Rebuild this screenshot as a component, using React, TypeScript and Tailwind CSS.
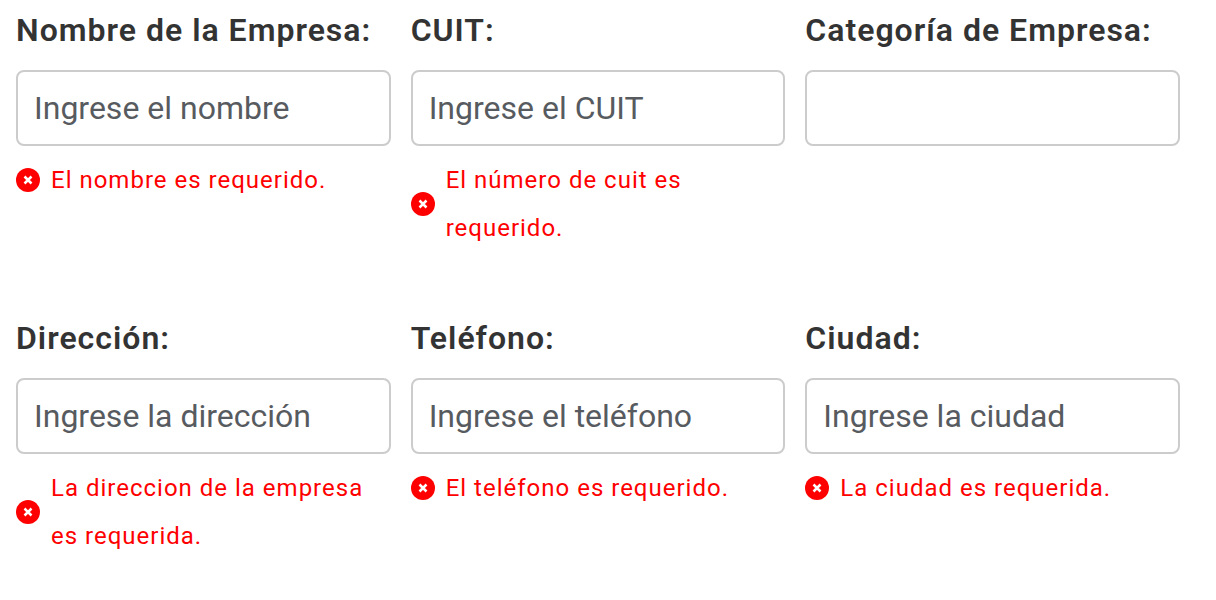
import React from 'react';

type Field = { id: string; label: string; placeholder?: string; error?: string };

const fields: Field[] = [
  { id: 'nombre', label: 'Nombre de la Empresa:', placeholder: 'Ingrese el nombre', error: 'El nombre es requerido.' },
  { id: 'cuit', label: 'CUIT:', placeholder: 'Ingrese el CUIT', error: 'El número de cuit es requerido.' },
  { id: 'categoria', label: 'Categoría de Empresa:' },
  { id: 'direccion', label: 'Dirección:', placeholder: 'Ingrese la dirección', error: 'La direccion de la empresa es requerida.' },
  { id: 'telefono', label: 'Teléfono:', placeholder: 'Ingrese el teléfono', error: 'El teléfono es requerido.' },
  { id: 'ciudad', label: 'Ciudad:', placeholder: 'Ingrese la ciudad', error: 'La ciudad es requerida.' },
];

function ErrorIcon() {
  return (
    <svg viewBox="0 0 24 24" className="size-6 shrink-0" aria-hidden="true">
      <circle cx="12" cy="12" r="12" fill="currentColor" />
      <path d="M8.5 8.5l7 7M15.5 8.5l-7 7" stroke="white" strokeWidth="2.5" />
    </svg>
  );
}

function FormField({ id, label, placeholder, error }: Field) {
  return (
    <div className="min-w-0">
      <label htmlFor={id} className="block whitespace-nowrap text-[32px] leading-[60px] font-semibold tracking-[1px] text-[#333]">
        {label}
      </label>
      <input
        id={id}
        type="text"
        placeholder={placeholder}
        aria-invalid={Boolean(error)}
        aria-describedby={error ? `${id}-error` : undefined}
        className="mt-2.5 block h-19 w-full rounded-lg border-2 border-[#ccc] bg-white px-4 text-[32px] text-[#333] placeholder:text-[#575b5f]"
      />
      {error && (
        <div className="mt-2.5 flex items-center gap-[11px] text-[#f00]">
          <ErrorIcon />
          <p id={`${id}-error`} className="text-2xl leading-12 tracking-[1px]">
            {error}
          </p>
        </div>
      )}
    </div>
  );
}

export default function App() {
  return (
    <form className="grid grid-cols-3 gap-x-5 gap-y-14 bg-white pr-9 pl-4 font-[Roboto,sans-serif]">
      {fields.map((field) => (
        <FormField key={field.id} {...field} />
      ))}
    </form>
  );
}
